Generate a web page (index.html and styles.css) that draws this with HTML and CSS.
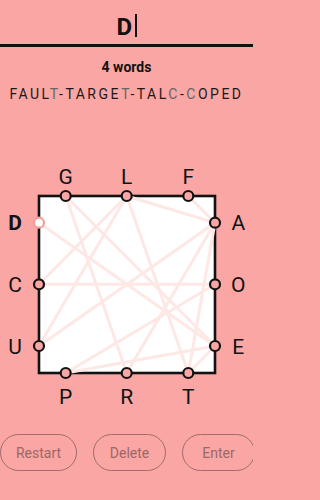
FILE: index.html
```html
<!DOCTYPE html>
<html lang="en">
<head>
<meta charset="utf-8">
<title>Letter Boxed</title>
<link rel="stylesheet" href="styles.css">
</head>
<body>
<header class="entry">
  <span class="entry-word">D</span><span class="cursor"></span>
</header>
<p class="count">4 words</p>
<p class="words">FAUL<span class="dim">T</span>-TARGE<span class="dim">T</span>-TAL<span class="dim">C</span>-<span class="dim">C</span>OPED</p>
<svg class="board" width="253" height="260" viewBox="0 150 253 260">
  <rect class="box" x="39" y="196" width="176" height="177"/>
  <g class="trail">
    <line x1="188.3" y1="196" x2="215" y2="222.7"/>
    <line x1="215" y1="222.7" x2="39" y2="346"/>
    <line x1="39" y1="346" x2="126.7" y2="196"/>
    <line x1="126.7" y1="196" x2="188.3" y2="373"/>
    <line x1="188.3" y1="373" x2="215" y2="222.7"/>
    <line x1="215" y1="222.7" x2="126.7" y2="373"/>
    <line x1="126.7" y1="373" x2="65.7" y2="196"/>
    <line x1="65.7" y1="196" x2="215" y2="346"/>
    <line x1="215" y1="346" x2="188.3" y2="373"/>
    <line x1="215" y1="222.7" x2="126.7" y2="196"/>
    <line x1="126.7" y1="196" x2="39" y2="284.3"/>
    <line x1="39" y1="284.3" x2="215" y2="284.3"/>
    <line x1="215" y1="284.3" x2="65.7" y2="373"/>
    <line x1="65.7" y1="373" x2="215" y2="346"/>
    <line x1="215" y1="346" x2="39" y2="222.7"/>
  </g>
  <g class="dots">
    <circle cx="65.7" cy="196" r="5"/>
    <circle cx="126.7" cy="196" r="5"/>
    <circle cx="188.3" cy="196" r="5"/>
    <circle cx="39" cy="284.3" r="5"/>
    <circle cx="39" cy="346" r="5"/>
    <circle cx="215" cy="222.7" r="5"/>
    <circle cx="215" cy="284.3" r="5"/>
    <circle cx="215" cy="346" r="5"/>
    <circle cx="65.7" cy="373" r="5"/>
    <circle cx="126.7" cy="373" r="5"/>
    <circle cx="188.3" cy="373" r="5"/>
  </g>
  <circle class="dot-active" cx="39" cy="222.7" r="5"/>
  <g class="letters">
    <text x="65.7" y="183.5">G</text>
    <text x="126.7" y="183.5">L</text>
    <text x="188.3" y="183.5">F</text>
    <text class="letter-active" x="15" y="230.2">D</text>
    <text x="15" y="291.8">C</text>
    <text x="15" y="353.5">U</text>
    <text x="238.3" y="230.2">A</text>
    <text x="238.3" y="291.8">O</text>
    <text x="238.3" y="353.5">E</text>
    <text x="65.7" y="404">P</text>
    <text x="126.7" y="404">R</text>
    <text x="188.3" y="404">T</text>
  </g>
</svg>
<div class="controls">
  <button class="btn btn-restart">Restart</button>
  <button class="btn btn-delete">Delete</button>
  <button class="btn btn-enter">Enter</button>
</div>
</body>
</html>
```
FILE: styles.css
```css
html, body {
  margin: 0;
  padding: 0;
  background: #faa6a4;
}
body {
  width: 253px;
  height: 500px;
  overflow: hidden;
  font-family: Roboto, "Liberation Sans", sans-serif;
  color: #121212;
}
.entry {
  height: 34px;
  padding-top: 10px;
  display: flex;
  align-items: center;
  justify-content: center;
  border-bottom: 3px solid #121212;
}
.entry-word {
  font-size: 24px;
  font-weight: 700;
  line-height: 24px;
}
.cursor {
  width: 1.5px;
  height: 23px;
  margin-left: 3px;
  margin-top: -3px;
  background: #121212;
}
.count {
  margin: 10px 0 0;
  height: 20px;
  line-height: 20px;
  text-align: center;
  font-size: 14px;
  font-weight: 700;
}
.words {
  margin: 8px 0 0;
  height: 18px;
  line-height: 18px;
  text-align: center;
  font-size: 14px;
  letter-spacing: 2.5px;
  color: #1a1a1a;
  white-space: nowrap;
}
.dim {
  color: #666;
}
.board {
  display: block;
  margin-top: 47px;
}
.box {
  fill: #fff;
  stroke: #121212;
  stroke-width: 2.6;
}
.trail line {
  stroke: #fde8e5;
  stroke-width: 3;
  stroke-linecap: round;
}
.dots circle {
  fill: #faa6a4;
  stroke: #121212;
  stroke-width: 2.2;
}
.dot-active {
  fill: #fff;
  stroke: #f49d98;
  stroke-width: 2.2;
}
.letters text {
  font-family: Roboto, "Liberation Sans", sans-serif;
  font-size: 21px;
  font-weight: 400;
  text-anchor: middle;
  fill: #121212;
}
.letters .letter-active {
  font-weight: 700;
}
.controls {
  display: flex;
  gap: 16px;
  margin-top: 24px;
  width: 260px;
}
.btn {
  flex: none;
  height: 37px;
  border: 1px solid #a06b6b;
  border-radius: 19px;
  background: transparent;
  color: #9d6666;
  font-family: Roboto, "Liberation Sans", sans-serif;
  font-size: 14px;
  padding: 0;
}
.btn-restart { width: 77px; }
.btn-delete { width: 73px; }
.btn-enter { width: 73px; }
```
